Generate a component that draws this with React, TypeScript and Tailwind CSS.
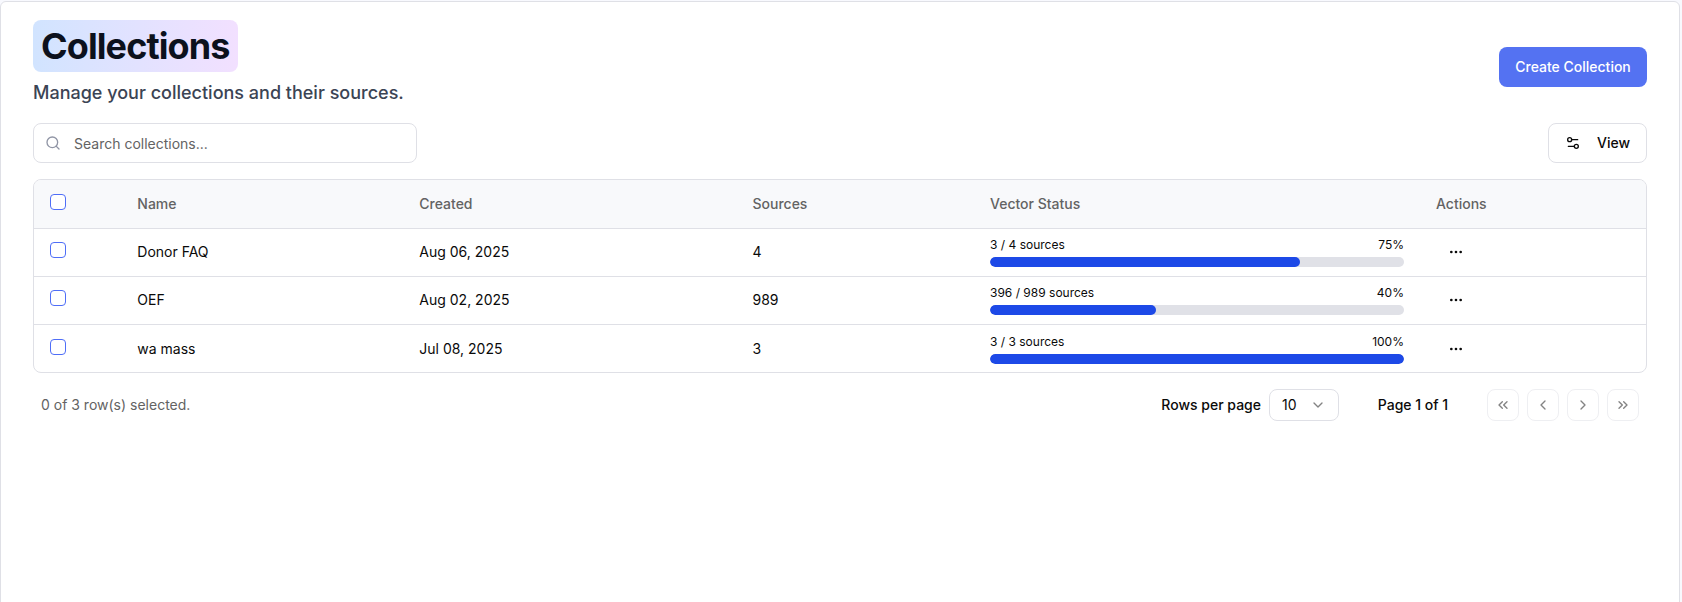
import { ChevronDown, ChevronLeft, ChevronRight, ChevronsLeft, ChevronsRight, Ellipsis, Search, Settings2 } from "lucide-react";

const rows = [
  { name: "Donor FAQ", created: "Aug 06, 2025", sources: 4, done: 3, pct: 75 },
  { name: "OEF", created: "Aug 02, 2025", sources: 989, done: 396, pct: 40 },
  { name: "wa mass", created: "Jul 08, 2025", sources: 3, done: 3, pct: 100 },
];

const grid = "grid grid-cols-[87.3px_282px_333.2px_237.5px_446px_1fr]";

function Checkbox() {
  return <button className="block size-4 rounded-[4px] border border-[#4f6ef7] bg-white" />;
}

const pagerIcons = [ChevronsLeft, ChevronLeft, ChevronRight, ChevronsRight];

export default function App() {
  return (
    <div className="h-[602px] overflow-hidden bg-[#f8f9fe] pt-px pr-[2px] font-['Inter',sans-serif] text-sm text-[#0a0a0a]">
      <main className="h-[640px] rounded-md border border-[#dfe0e6] bg-white px-8 pt-[18px]">
        <header className="flex items-center justify-between">
          <div>
            <h1 className="h-[52px] w-fit rounded-lg bg-gradient-to-r from-[#d1e4ff] to-[#f2e0ff] px-2 text-4xl leading-[52px] font-bold tracking-tight text-[#0c111d]">
              Collections
            </h1>
            <p className="mt-[7px] text-lg leading-7 font-medium text-[#3b4454]">
              Manage your collections and their sources.
            </p>
          </div>
          <button className="mt-[7px] h-10 w-[148px] rounded-lg bg-[#5472f2] font-medium text-white">Create Collection</button>
        </header>

        <div className="mt-4 flex justify-between">
          <div className="flex h-10 w-96 items-center rounded-lg border border-[#dfe0e6] pl-[11px] text-[#636363]">
            <Search className="size-4 text-[#9095a5]" />
            <span className="ml-[13px] pt-px">Search collections...</span>
          </div>
          <button className="flex h-10 w-[99px] items-center rounded-lg border border-[#dfe0e6] pl-4 font-medium">
            <Settings2 className="mr-4 size-4" />
            View
          </button>
        </div>

        <section className="mt-4 overflow-hidden rounded-lg border border-[#dfe0e6]">
          <div className={grid + " h-[49px] border-b border-[#dfe0e6] bg-[#f8f9fb] font-medium text-[#636363]"}>
            <div className="pt-[14px] pl-4"><Checkbox /></div>
            {["Name", "Created", "Sources", "Vector Status", "Actions"].map((h) => (
              <div key={h} className="flex items-center pl-4">{h}</div>
            ))}
          </div>
          {rows.map((r) => (
            <div key={r.name} className={grid + " h-12 border-b border-[#dfe0e6] last:h-[47px] last:border-b-0 last:pt-px"}>
              <div className="pt-[13px] pl-4"><Checkbox /></div>
              <div className="pt-[13px] pl-4">{r.name}</div>
              <div className="pt-[13px] pl-4">{r.created}</div>
              <div className="pt-[13px] pl-4">{r.sources}</div>
              <div className="px-4 pt-2">
                <div className="flex justify-between text-xs leading-4">
                  <span>{r.done} / {r.sources} sources</span>
                  <span>{r.pct}%</span>
                </div>
                <div className="mt-1 h-[10px] overflow-hidden rounded-full bg-[#e0e1e7]">
                  <div className="h-full rounded-full bg-[#1d49e7]" style={{ width: `${r.pct}%` }} />
                </div>
              </div>
              <div className="pt-[15px] pl-7"><Ellipsis className="size-4" /></div>
            </div>
          ))}
        </section>

        <footer className="mt-4 flex h-8 items-center px-2">
          <span className="flex-1 text-[#636363]">0 of 3 row(s) selected.</span>
          <span className="font-medium">Rows per page</span>
          <button className="ml-2 flex h-8 w-[70px] items-center justify-between rounded-lg border border-[#dfe0e6] px-3">
            10
            <ChevronDown className="size-4 opacity-50" />
          </button>
          <span className="ml-6 w-[100px] text-center font-medium">Page 1 of 1</span>
          <div className="ml-6 flex gap-2">
            {pagerIcons.map((Icon, i) => (
              <button key={i} className="flex size-8 items-center justify-center rounded-lg border border-[#dfe0e6] opacity-50">
                <Icon className="size-4" />
              </button>
            ))}
          </div>
        </footer>
      </main>
    </div>
  );
}
